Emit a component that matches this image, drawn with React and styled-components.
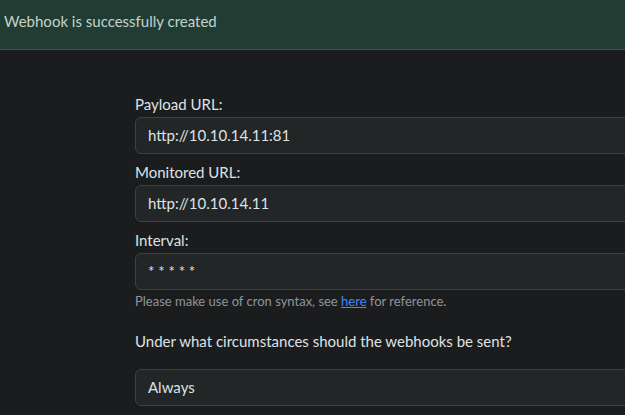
import React from "react";
import styled, { createGlobalStyle } from "styled-components";

const GlobalStyle = createGlobalStyle`
  html, body {
    margin: 0;
    padding: 0;
    background: #1b1c1e;
    overflow: hidden;
  }
  body {
    font-family: "Lato", "Noto Sans", sans-serif;
    color: #dee2e6;
    font-size: 15px;
    line-height: 24px;
  }
`;

const Alert = styled.div`
  background: #213c33;
  border-bottom: 1px solid #2f5d48;
  padding: 9px 4px 16px;
  color: #c3d3cb;
`;

const Page = styled.div`
  padding: 42px 0 0 135px;
`;

const Form = styled.form`
  width: 620px;
  display: flex;
  flex-direction: column;
`;

const Group = styled.div`
  display: flex;
  flex-direction: column;
  margin-bottom: ${(p) => p.gap ?? 6}px;
`;

const Label = styled.label`
  display: block;
  margin-bottom: 1px;
  color: #dee2e6;
`;

const Input = styled.div`
  box-sizing: border-box;
  height: 37px;
  padding: 6px 12px;
  background: #222627;
  border: 1px solid #3c4144;
  border-radius: 6px;
  color: #dee2e6;
  line-height: 23px;
`;

const Help = styled.div`
  font-size: 13px;
  line-height: 21px;
  margin-top: 1px;
  color: #8f949a;

  a {
    color: #3d8bfd;
    text-decoration: underline;
  }
`;

const Question = styled.p`
  margin: 17px 0 16px;
  color: #dee2e6;
`;

export default function App() {
  return (
    <>
      <GlobalStyle />
      <Alert>Webhook is successfully created</Alert>
      <Page>
        <Form>
          <Group>
            <Label>Payload URL:</Label>
            <Input>http://10.10.14.11:81</Input>
          </Group>
          <Group>
            <Label>Monitored URL:</Label>
            <Input>http://10.10.14.11</Input>
          </Group>
          <Group gap={0}>
            <Label>Interval:</Label>
            <Input>* * * * *</Input>
            <Help>
              Please make use of cron syntax, see <a href="#">here</a> for
              reference.
            </Help>
          </Group>
          <Question>Under what circumstances should the webhooks be sent?</Question>
          <Input>Always</Input>
        </Form>
      </Page>
    </>
  );
}
